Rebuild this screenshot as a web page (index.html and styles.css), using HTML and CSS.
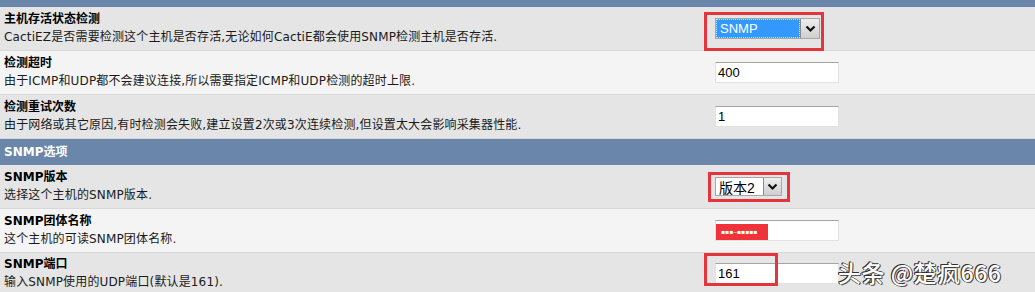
FILE: index.html
```html
<!DOCTYPE html>
<html lang="zh-CN">
<head>
    <meta charset="UTF-8">
    <title>设备选项</title>
    <link rel="stylesheet" href="styles.css">
</head>
<body>
    <div class="page">
        <div class="band"></div>

        <div class="row">
            <div class="label">
                <div class="title">主机存活状态检测</div>
                <div class="desc">CactiEZ是否需要检测这个主机是否存活,无论如何CactiE都会使用SNMP检测主机是否存活.</div>
            </div>
            <div class="field">
                <span class="mark mark-a">
                    <span class="select select-wide">
                        <span class="select-value selected">SNMP</span>
                        <span class="select-btn"><svg width="11" height="8" viewBox="0 0 11 8"><path d="M1.5 1.5 L5.5 5.5 L9.5 1.5" fill="none" stroke="#111" stroke-width="2.2"/></svg></span>
                    </span>
                </span>
            </div>
        </div>

        <div class="row alt">
            <div class="label">
                <div class="title">检测超时</div>
                <div class="desc">由于ICMP和UDP都不会建议连接,所以需要指定ICMP和UDP检测的超时上限.</div>
            </div>
            <div class="field">
                <input class="text" type="text" value="400">
            </div>
        </div>

        <div class="row">
            <div class="label">
                <div class="title">检测重试次数</div>
                <div class="desc">由于网络或其它原因,有时检测会失败,建立设置2次或3次连续检测,但设置太大会影响采集器性能.</div>
            </div>
            <div class="field">
                <input class="text" type="text" value="1">
            </div>
        </div>

        <div class="section">SNMP选项</div>

        <div class="row">
            <div class="label">
                <div class="title">SNMP版本</div>
                <div class="desc">选择这个主机的SNMP版本.</div>
            </div>
            <div class="field">
                <span class="mark mark-b">
                    <span class="select select-small">
                        <span class="select-value">版本2</span>
                        <span class="select-btn"><svg width="11" height="8" viewBox="0 0 11 8"><path d="M1.5 1.5 L5.5 5.5 L9.5 1.5" fill="none" stroke="#111" stroke-width="2.2"/></svg></span>
                    </span>
                </span>
            </div>
        </div>

        <div class="row alt">
            <div class="label">
                <div class="title">SNMP团体名称</div>
                <div class="desc">这个主机的可读SNMP团体名称.</div>
            </div>
            <div class="field">
                <span class="secret">
                    <input class="text" type="text" value="">
                    <span class="redact">▪▪▪‒▪▪▪▪▪</span>
                </span>
            </div>
        </div>

        <div class="row last">
            <div class="label">
                <div class="title">SNMP端口</div>
                <div class="desc">输入SNMP使用的UDP端口(默认是161).</div>
            </div>
            <div class="field">
                <span class="mark mark-c">
                    <input class="text" type="text" value="161">
                </span>
            </div>
        </div>

        <div class="watermark">头条 @楚疯666</div>
    </div>
</body>
</html>
```

FILE: styles.css
```css
* {
    box-sizing: border-box;
    margin: 0;
    padding: 0;
}

body {
    font-family: "DejaVu Sans", "Noto Sans CJK SC", sans-serif;
    font-size: 12px;
    color: #1a1a1a;
    background: #e5e5e5;
}

.page {
    position: relative;
    width: 1035px;
    height: 292px;
    overflow: hidden;
}

.band {
    height: 7px;
    background: #6a87ab;
}

.row {
    display: grid;
    grid-template-columns: 715px 1fr;
    align-items: center;
    height: 44px;
    background: #e5e5e5;
    border-bottom: 1px solid #d8d8d8;
}

.row.alt {
    background: #f4f4f4;
}

.row.last {
    height: 41px;
    border-bottom: none;
}

.label {
    padding: 2px 4px;
}

.title {
    font-weight: bold;
    line-height: 18px;
    color: #000;
}

.desc {
    line-height: 19px;
    letter-spacing: 0.15px;
}

.section {
    height: 26px;
    line-height: 26px;
    padding-left: 4px;
    background: #6a87ab;
    color: #fff;
    font-weight: bold;
}

.field {
    display: flex;
    align-items: center;
}

.text {
    width: 124px;
    height: 21px;
    border: 1px solid #e2e2e2;
    border-top-color: #a4a4a4;
    background: #fff;
    font-family: "Liberation Sans", Arial, sans-serif;
    font-size: 13px;
    padding: 0 2px;
    color: #000;
    outline: none;
}

.select {
    display: inline-flex;
    height: 21px;
    border: 1px solid #a7a7a7;
    background: #fff;
    font-family: "Liberation Sans", "Noto Sans CJK SC", sans-serif;
    font-size: 13px;
}

.select-wide {
    width: 105px;
}

.select-small {
    width: 67px;
    height: 19px;
    font-size: 14px;
}

.select-value {
    flex: 1;
    display: flex;
    align-items: center;
    padding-left: 3px;
    color: #000;
}

.select-value.selected {
    background: #3399ff;
    color: #fff;
    border: 1px dotted #d0e4ff;
}

.select-btn {
    width: 19px;
    display: flex;
    align-items: center;
    justify-content: center;
    background: linear-gradient(#eeeeee, #cfcfcf);
    border-left: 1px solid #8a8a8a;
}

.select-small .select-btn {
    width: 18px;
}

.mark {
    position: relative;
    display: inline-flex;
}

.mark::after {
    content: "";
    position: absolute;
    border: 3px solid #e4343c;
}

.mark-a::after {
    left: -11px;
    right: -4px;
    top: -6px;
    bottom: -12px;
}

.mark-b::after {
    left: -7px;
    right: -8px;
    top: -5px;
    bottom: -6px;
}

.mark-c::after {
    left: -11px;
    right: 61px;
    top: -10px;
    bottom: -2px;
}

.secret {
    position: relative;
    display: inline-flex;
}

.redact {
    position: absolute;
    left: 1px;
    bottom: 1px;
    width: 52px;
    height: 16px;
    overflow: hidden;
    white-space: nowrap;
    background: #f0333a;
    color: #fff;
    font-size: 6px;
    line-height: 16px;
    padding-left: 5px;
}

.watermark {
    position: absolute;
    left: 838px;
    top: 255px;
    font-family: "Noto Sans CJK SC", sans-serif;
    font-size: 23px;
    font-weight: 500;
    color: #fff;
    letter-spacing: 0.5px;
    text-shadow: -1px -1px 0 #333, 1px 1px 0 #555, 1px 0 0 #555, -1px 0 0 #333;
}
```
